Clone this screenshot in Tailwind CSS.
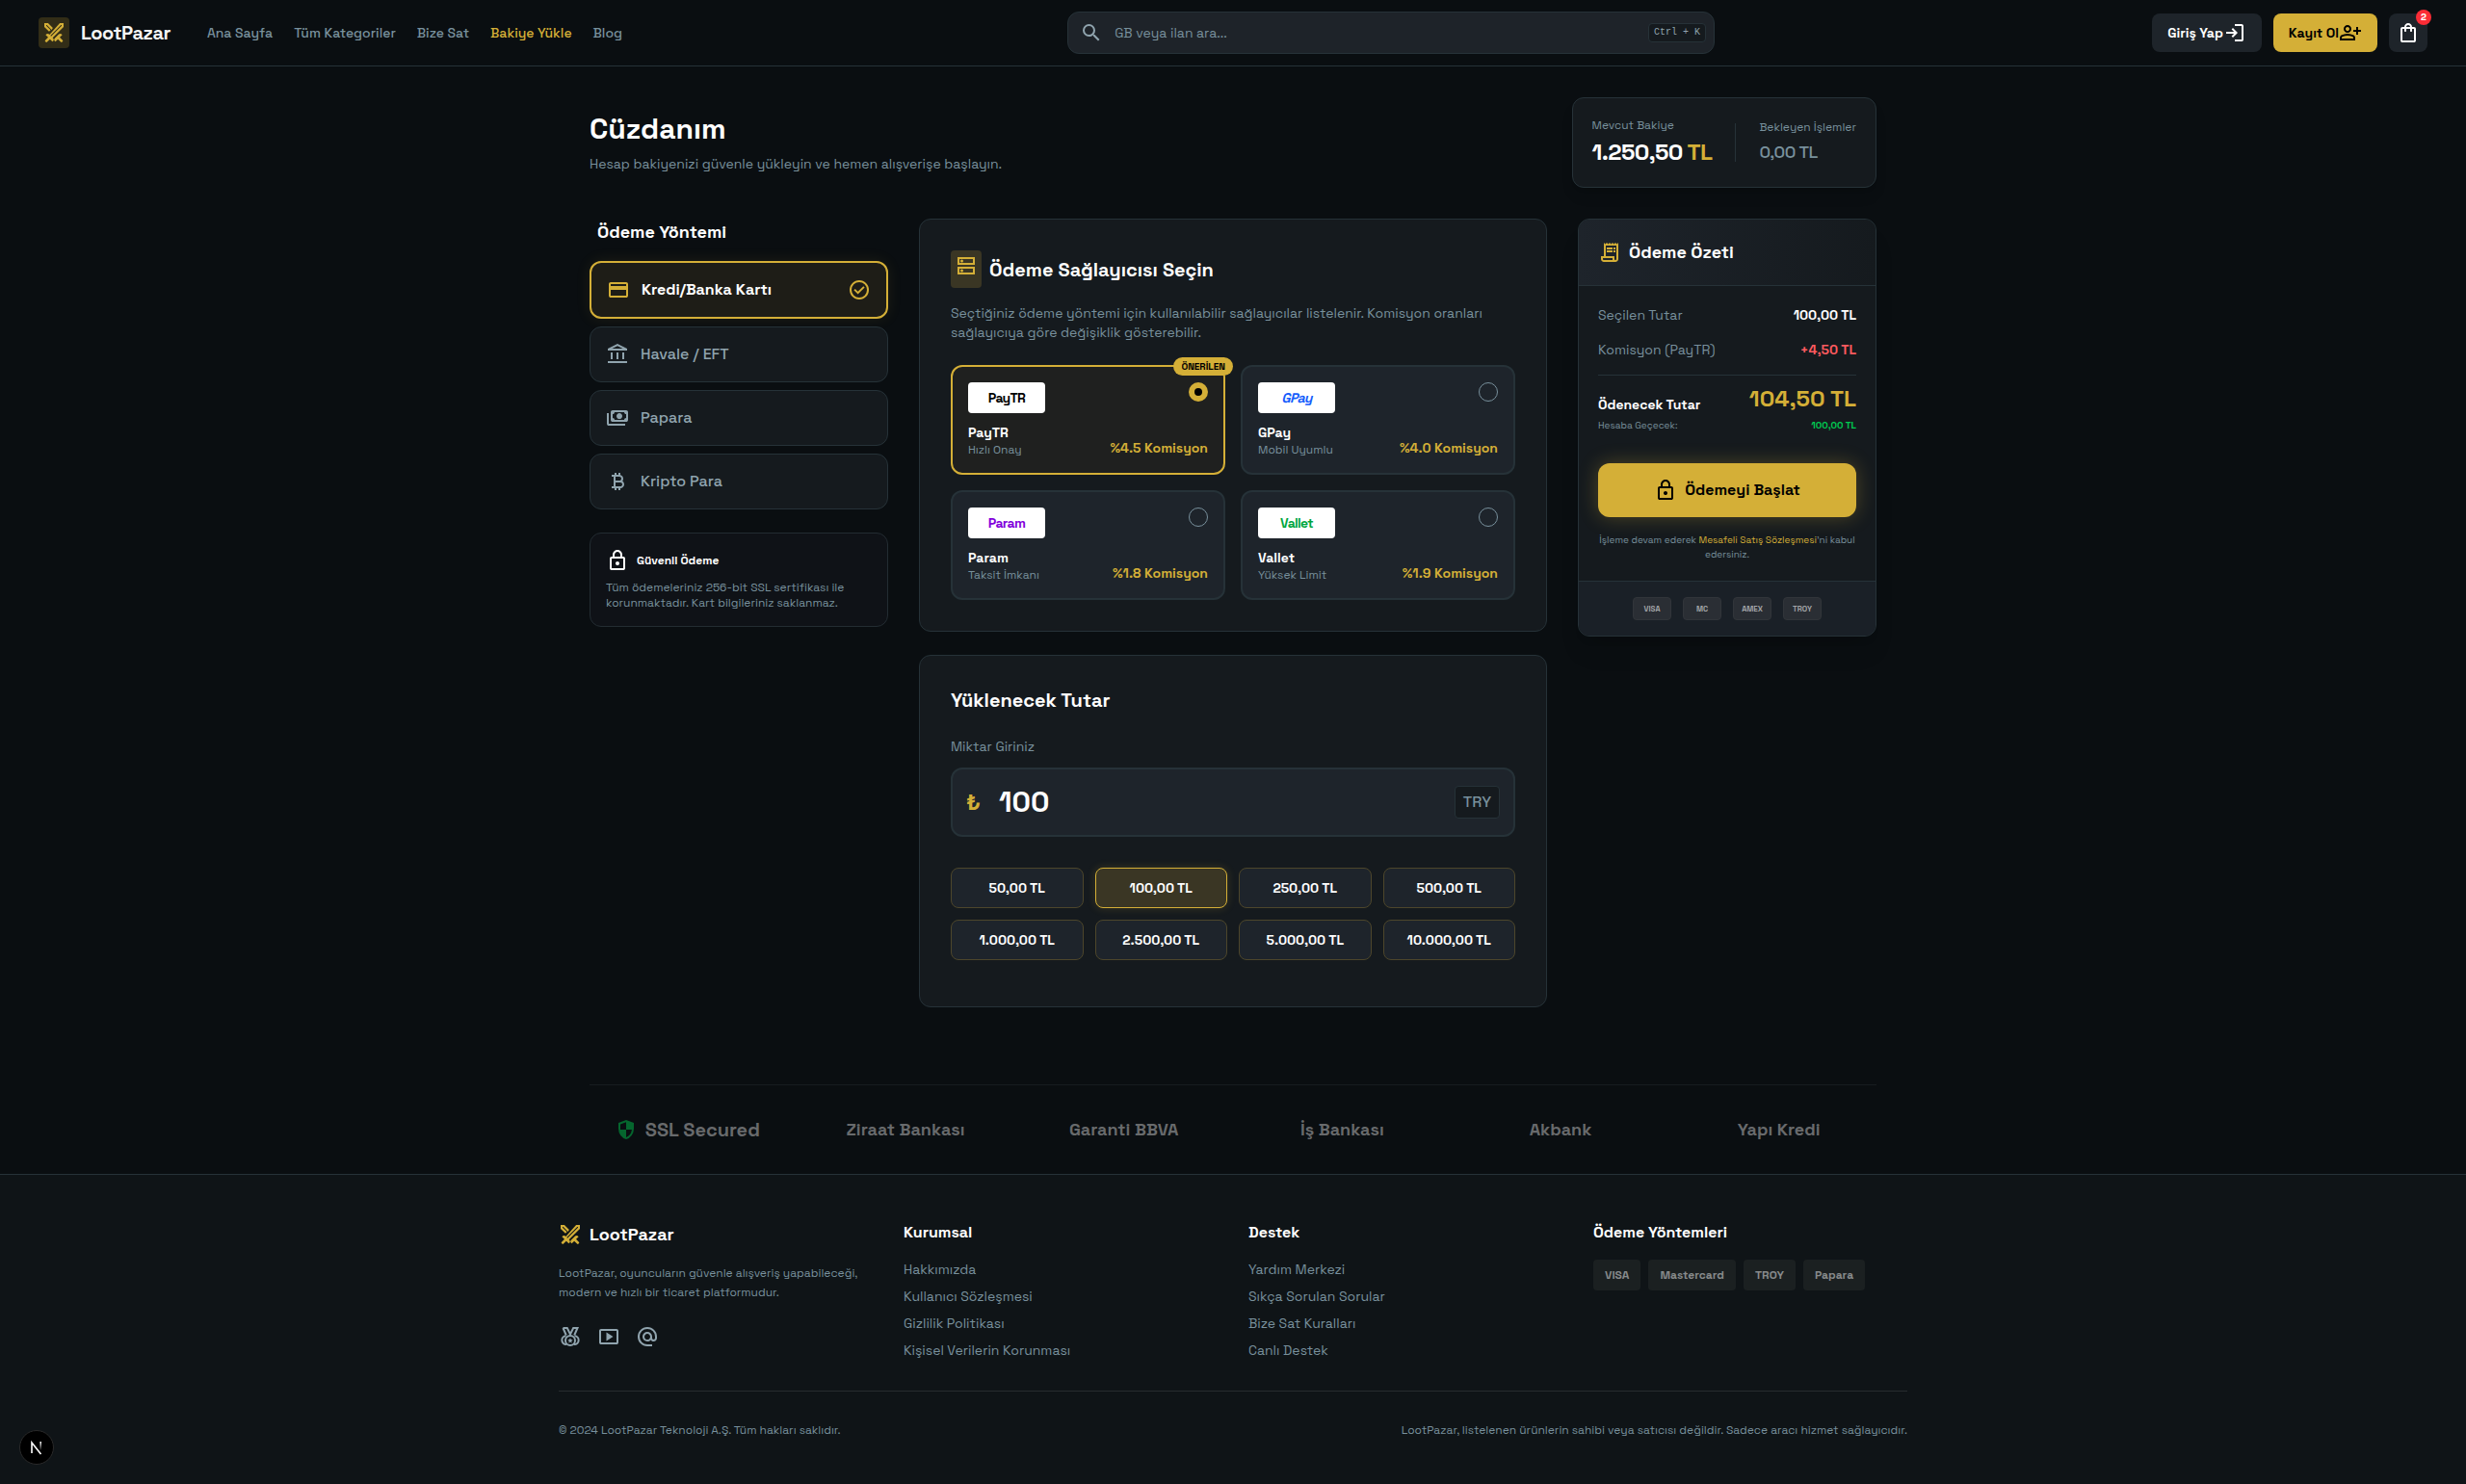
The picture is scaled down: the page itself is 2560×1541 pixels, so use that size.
<!DOCTYPE html>
<html lang="tr">
<head>
    <meta charset="UTF-8">
    <meta name="viewport" content="width=device-width, initial-scale=1.0">
    <title>Cüzdanım - LootPazar</title>
    <script src="https://cdn.jsdelivr.net/npm/@tailwindcss/browser@4"></script>
</head>
<body class="bg-[#0a0e11] text-white font-['Space_Grotesk',Inter,sans-serif] min-h-screen flex flex-col">

    <!-- Icon sprite -->
    <svg class="hidden" xmlns="http://www.w3.org/2000/svg">
        <symbol id="i-swords" viewBox="0 0 24 24"><path fill-rule="evenodd" d="M19.05 21.6l-2.925-2.9l-2.6 2.6l-.7-.7q-.6-.6-.6-1.425t.6-1.425l4.25-4.25q.6-.6 1.425-.6t1.425.6l.7.7l-2.6 2.6l2.9 2.925q.3.3.3.7t-.3.7l-.475.475q-.3.3-.7.3t-.7-.3M22 5.9L10.65 17.25l.525.5q.6.6.6 1.425t-.6 1.425l-.7.7l-2.6-2.6l-2.925 2.9q-.3.3-.7.3t-.7-.3l-.475-.475q-.3-.3-.3-.7t.3-.7l2.9-2.925l-2.6-2.6l.7-.7q.6-.6 1.425-.6t1.425.6l.5.525L18.1 2H22zM9.05 15.65L20 4.7V4h-.7L8.35 14.95zM6.95 10.85L2 5.9V2h3.9l4.95 4.95l-1.25 1.95L4.7 4H4v.7l4.6 4.6z"/></symbol>
        <symbol id="i-search" viewBox="0 0 24 24"><path d="M15.5 14h-.79l-.28-.27A6.471 6.471 0 0 0 16 9.5 6.5 6.5 0 1 0 9.5 16c1.61 0 3.09-.59 4.23-1.57l.27.28v.79l5 4.99L20.49 19l-4.99-5zm-6 0C7.01 14 5 11.99 5 9.5S7.01 5 9.5 5 14 7.01 14 9.5 11.99 14 9.5 14z"/></symbol>
        <symbol id="i-login" viewBox="0 0 24 24"><path d="M12 21v-2h7V5h-7V3h7q.825 0 1.413.588T21 5v14q0 .825-.587 1.413T19 21zm-2-4l-1.375-1.45l2.55-2.55H3v-2h8.175l-2.55-2.55L10 7l5 5z"/></symbol>
        <symbol id="i-person-add" viewBox="0 0 24 24"><path d="M18 14v-3h-3V9h3V6h2v3h3v2h-3v3zm-9-2q-1.65 0-2.825-1.175T5 8t1.175-2.825T9 4t2.825 1.175T13 8t-1.175 2.825T9 12m-8 8v-2.8q0-.85.438-1.562T2.6 14.55q1.55-.775 3.15-1.162T9 13t3.25.388t3.15 1.162q.725.375 1.163 1.088T17 17.2V20zm2-2h12v-.8q0-.275-.137-.5t-.363-.35q-1.35-.675-2.725-1.012T9 15t-2.775.338T3.5 16.35q-.225.125-.363.35T3 17.2zm6-8q.825 0 1.413-.587T11 8t-.587-1.412T9 6t-1.412.588T7 8t.588 1.413T9 10"/></symbol>
        <symbol id="i-bag" viewBox="0 0 24 24"><path d="M6 22q-.825 0-1.412-.587T4 20V8q0-.825.588-1.412T6 6h2q0-1.65 1.175-2.825T12 2t2.825 1.175T16 6h2q.825 0 1.413.588T20 8v12q0 .825-.587 1.413T18 22zm0-2h12V8h-2v2q0 .425-.288.713T15 11t-.712-.288T14 10V8h-4v2q0 .425-.288.713T9 11t-.712-.288T8 10V8H6zm4-14h4q0-.825-.587-1.412T12 4t-1.412.588T10 6"/></symbol>
        <symbol id="i-card" viewBox="0 0 24 24"><path d="M22 6v12q0 .825-.587 1.413T20 20H4q-.825 0-1.412-.587T2 18V6q0-.825.588-1.412T4 4h16q.825 0 1.413.588T22 6M4 8h16V6H4zm0 4v6h16v-6z"/></symbol>
        <symbol id="i-bank" viewBox="0 0 24 24"><path d="M5 17v-7h2v7zm6 0v-7h2v7zm-9 4v-2h20v2zm15-4v-7h2v7zM2 8V6l10-5l10 5v2zm4.475-2h11.05L12 3.25z"/></symbol>
        <symbol id="i-payments" viewBox="0 0 24 24"><path d="M14 13q-1.25 0-2.125-.875T11 10t.875-2.125T14 7t2.125.875T17 10t-.875 2.125T14 13m-7 3q-.825 0-1.412-.587T5 14V6q0-.825.588-1.412T7 4h14q.825 0 1.413.588T23 6v8q0 .825-.587 1.413T21 16zm2-2h10q0-.825.588-1.412T21 12V8q-.825 0-1.412-.587T19 6H9q0 .825-.587 1.413T7 8v4q.825 0 1.413.588T9 14m11 6H3q-.825 0-1.412-.587T1 18V7h2v11h17z"/></symbol>
        <symbol id="i-bitcoin" viewBox="0 0 24 24"><path d="M9 21v-2H6v-2h2V7H6V5h3V3h2v2h2V3h2v2.125q1.3.35 2.15 1.413T18 9q0 .725-.25 1.388t-.7 1.187q.875.525 1.413 1.425T19 15q0 1.65-1.175 2.825T15 19v2h-2v-2h-2v2zm1-10h4q.825 0 1.413-.587T16 9t-.587-1.412T14 7h-4zm0 6h5q.825 0 1.413-.587T17 15t-.587-1.412T15 13h-5z"/></symbol>
        <symbol id="i-lock" viewBox="0 0 24 24"><path d="M6 22q-.825 0-1.412-.587T4 20V10q0-.825.588-1.412T6 8h1V6q0-2.075 1.463-3.537T12 1t3.538 1.463T17 6v2h1q.825 0 1.413.588T20 10v10q0 .825-.587 1.413T18 22zm0-2h12V10H6zm6-3q.825 0 1.413-.587T14 15t-.587-1.412T12 13t-1.412.588T10 15t.588 1.413T12 17M9 8h6V6q0-1.25-.875-2.125T12 3t-2.125.875T9 6z"/></symbol>
        <symbol id="i-check" viewBox="0 0 24 24"><path d="m10.6 16.6l7.05-7.05l-1.4-1.4l-5.65 5.65l-2.85-2.85l-1.4 1.4zM12 22q-2.075 0-3.9-.788t-3.175-2.137T2.788 15.9T2 12t.788-3.9t2.137-3.175T8.1 2.788T12 2t3.9.788t3.175 2.137T21.213 8.1T22 12t-.788 3.9t-2.137 3.175t-3.175 2.138T12 22m0-2q3.35 0 5.675-2.325T20 12t-2.325-5.675T12 4T6.325 6.325T4 12t2.325 5.675T12 20"/></symbol>
        <symbol id="i-dns" viewBox="0 0 24 24"><path fill-rule="evenodd" d="M3 3h18v8H3zM5 5v4h14V5zM3 13h18v8H3zM5 15v4h14v-4z"/><circle cx="7.5" cy="7" r="1.5"/><circle cx="7.5" cy="17" r="1.5"/></symbol>
        <symbol id="i-receipt" viewBox="0 0 24 24"><path d="M19.5 3.5 18 2l-1.5 1.5L15 2l-1.5 1.5L12 2l-1.5 1.5L9 2 7.5 3.5 6 2v14H3v3c0 1.66 1.34 3 3 3h12c1.66 0 3-1.34 3-3V2l-1.5 1.5zM15 20H6c-.55 0-1-.45-1-1v-1h10v2zm4-1c0 .55-.45 1-1 1s-1-.45-1-1v-3H8V5h11v14zM9 7h6v2H9zM16 7h2v2h-2zM9 10h6v2H9zM16 10h2v2h-2z"/></symbol>
        <symbol id="i-shield" viewBox="0 0 24 24"><path d="M12 22q-3.475-.875-5.738-3.988T4 11.1V5l8-3l8 3v6.1q0 3.8-2.262 6.913T12 22m0-2.1q2.425-.75 4.05-2.963T17.95 12H12V4.125l-6 2.25v5.175q0 .175.05.45H12z"/></symbol>
        <symbol id="i-medal" viewBox="0 0 24 24"><g fill="none" stroke="currentColor" stroke-width="2"><circle cx="12" cy="16" r="5"/><path d="M7.5 11.2A4.2 4.2 0 1 0 8 20M16.5 11.2A4.2 4.2 0 1 1 16 20M4.5 3h4.3l3.2 6.5L15.2 3h4.3l-3.3 7.5M7.8 10.5 4.5 3"/></g><path d="M12 13.2l.8 1.8 1.9.2-1.4 1.3.4 1.9-1.7-1-1.7 1 .4-1.9-1.4-1.3 1.9-.2z"/></symbol>
        <symbol id="i-video" viewBox="0 0 24 24"><path d="M9.5 16.5l7-4.5l-7-4.5zM4 20q-.825 0-1.412-.587T2 18V6q0-.825.588-1.412T4 4h16q.825 0 1.413.588T22 6v12q0 .825-.587 1.413T20 20zm0-2h16V6H4z"/></symbol>
        <symbol id="i-at" viewBox="0 0 24 24"><path d="M12 22q-2.075 0-3.9-.788t-3.175-2.137T2.788 15.9T2 12t.788-3.9t2.137-3.175T8.1 2.788T12 2t3.9.788t3.175 2.137T21.213 8.1T22 12v1.45q0 1.475-1.012 2.513T18.5 17q-.875 0-1.65-.375t-1.3-1.075q-.725.725-1.638 1.088T12 17q-2.075 0-3.537-1.463T7 12t1.463-3.537T12 7t3.538 1.463T17 12v1.45q0 .65.425 1.1T18.5 15t1.075-.45t.425-1.1V12q0-3.35-2.325-5.675T12 4T6.325 6.325T4 12t2.325 5.675T12 20h5v2zm0-7q1.25 0 2.125-.875T15 12t-.875-2.125T12 9t-2.125.875T9 12t.875 2.125T12 15"/></symbol>
    </svg>

    <!-- Header -->
    <header class="h-[69px] border-b border-[#263238] px-10 flex items-center justify-between">
        <div class="flex items-center gap-[38px]">
            <a href="#" class="flex items-center gap-3">
                <span class="size-8 rounded bg-[#322d17] text-[#d4af37] flex items-center justify-center"><svg class="size-6 fill-current"><use href="#i-swords"/></svg></span>
                <span class="text-xl font-bold tracking-tight text-[#f5f5f5]">LootPazar</span>
            </a>
            <nav class="flex items-center gap-[22px] text-sm font-medium text-[#78909c]">
                <a href="#">Ana Sayfa</a>
                <a href="#">Tüm Kategoriler</a>
                <a href="#">Bize Sat</a>
                <a href="#" class="text-[#d4af37]">Bakiye Yükle</a>
                <a href="#">Blog</a>
            </nav>
        </div>
        <div class="w-full max-w-2xl h-11 ml-2 rounded-xl border border-[#263238] bg-[#1e2329] flex items-center pl-3 pr-2 gap-3">
            <svg class="size-6 fill-[#90a4ae] shrink-0"><use href="#i-search"/></svg>
            <input type="text" aria-label="Ara" placeholder="GB veya ilan ara..." class="flex-1 bg-transparent text-sm text-white placeholder-[#78909c] outline-none">
            <kbd class="h-5 px-[5px] rounded border border-[#263238] bg-[#151a1e] text-[10px] leading-[18px] font-['Liberation_Mono',monospace] text-[#90a4ae]">Ctrl + K</kbd>
        </div>
        <div class="flex items-center gap-3 text-sm font-bold">
            <button class="h-10 px-4 rounded-lg bg-[#1e242a] flex items-center">Giriş Yap<svg class="size-6 fill-current"><use href="#i-login"/></svg></button>
            <button class="h-10 px-4 rounded-lg bg-[#d4af37] text-black flex items-center">Kayıt Ol<svg class="size-6 fill-current"><use href="#i-person-add"/></svg></button>
            <button aria-label="Sepet" class="relative size-10 rounded-lg bg-[#1e242a] flex items-center justify-center">
                <svg class="size-6 fill-current"><use href="#i-bag"/></svg>
                <span class="absolute -top-1 -right-1 size-4 rounded-full bg-[#fb2c36] text-[10px] leading-4 text-center">2</span>
            </button>
        </div>
    </header>

    <main class="w-full max-w-[1400px] mx-auto px-8 pt-8">
        <div class="flex items-center justify-between mb-8">
            <div>
                <h1 class="text-3xl font-bold">Cüzdanım</h1>
                <p class="mt-2 text-sm text-[#78909c]">Hesap bakiyenizi güvenle yükleyin ve hemen alışverişe başlayın.</p>
            </div>
            <div class="rounded-xl border border-[#263238] bg-[#151a1e] p-5 flex items-center gap-6 shadow-lg">
                <div>
                    <p class="text-xs text-[#78909c]">Mevcut Bakiye</p>
                    <p class="mt-1 text-2xl font-bold tracking-tight">1.250,50 <span class="text-[#d4af37]">TL</span></p>
                </div>
                <div class="w-px h-10 bg-[#263238]"></div>
                <div>
                    <p class="text-xs text-[#78909c]">Bekleyen İşlemler</p>
                    <p class="mt-1 text-lg font-medium tracking-tight text-[#78909c]">0,00 TL</p>
                </div>
            </div>
        </div>

        <div class="grid grid-cols-12 gap-8 items-start">
            <!-- Payment methods -->
            <aside class="col-span-3">
                <h3 class="px-2 mb-4 text-lg font-bold">Ödeme Yöntemi</h3>
                <div class="space-y-2 text-base font-medium text-[#90a4ae]">
                    <button class="w-full p-4 rounded-xl border-2 border-[#d4af37] bg-[#1e1d17] flex items-center gap-3 font-bold text-white shadow-[0_0_15px_rgba(212,175,55,0.1)]">
                        <svg class="size-6 fill-[#d4af37]"><use href="#i-card"/></svg>Kredi/Banka Kartı
                        <svg class="size-6 fill-[#d4af37] ml-auto"><use href="#i-check"/></svg>
                    </button>
                    <button class="w-full p-4 rounded-xl border border-[#263238] bg-[#151a1e] flex items-center gap-3"><svg class="size-6 fill-current"><use href="#i-bank"/></svg>Havale / EFT</button>
                    <button class="w-full p-4 rounded-xl border border-[#263238] bg-[#151a1e] flex items-center gap-3"><svg class="size-6 fill-current"><use href="#i-payments"/></svg>Papara</button>
                    <button class="w-full p-4 rounded-xl border border-[#263238] bg-[#151a1e] flex items-center gap-3"><svg class="size-6 fill-current"><use href="#i-bitcoin"/></svg>Kripto Para</button>
                </div>
                <div class="mt-6 p-4 rounded-xl border border-[#232c32] bg-[#0f1217]">
                    <div class="flex items-center gap-2 mb-2 text-xs font-bold"><svg class="size-6 fill-current"><use href="#i-lock"/></svg>Güvenli Ödeme</div>
                    <p class="text-xs text-[#78909c]">Tüm ödemeleriniz 256-bit SSL sertifikası ile korunmaktadır. Kart bilgileriniz saklanmaz.</p>
                </div>
            </aside>

            <div class="col-span-6 space-y-6">
                <!-- Providers -->
                <section class="rounded-xl border border-[#263238] bg-[#151a1e] p-8">
                    <h2 class="flex items-center gap-2 text-xl font-bold">
                        <span class="w-8 h-[39px] pt-1 rounded bg-[#3a3624] flex items-start justify-center"><svg class="size-6 fill-[#d4af37]"><use href="#i-dns"/></svg></span>
                        Ödeme Sağlayıcısı Seçin
                    </h2>
                    <p class="mt-4 mb-6 text-sm text-[#78909c]">Seçtiğiniz ödeme yöntemi için kullanılabilir sağlayıcılar listelenir. Komisyon oranları sağlayıcıya göre değişiklik gösterebilir.</p>
                    <div class="grid grid-cols-2 gap-4">
                        <label class="relative p-4 rounded-xl border-2 border-[#d4af37] bg-[#1f201f]">
                            <span class="absolute -top-2.5 -right-2.5 px-2 rounded-full bg-[#d4af37] text-black text-[10px] leading-[19px] font-bold">ÖNERİLEN</span>
                            <span class="flex justify-between items-start">
                                <span class="w-20 h-8 rounded bg-white text-black text-sm leading-8 font-bold tracking-tighter text-center">PayTR</span>
                                <input type="radio" name="provider" checked class="appearance-none size-5 rounded-full border-[#78909c] border checked:border-[6px] checked:border-[#d4af37] checked:bg-black">
                            </span>
                            <span class="mt-2.5 flex justify-between items-end">
                                <span><span class="block text-sm font-bold">PayTR</span><span class="block text-xs text-[#78909c]">Hızlı Onay</span></span>
                                <span class="text-sm font-bold text-[#d4af37]">%4.5 Komisyon</span>
                            </span>
                        </label>
                        <label class="relative p-4 rounded-xl border-2 border-[#263238] bg-[#1e242b]">
                            <span class="flex justify-between items-start">
                                <span class="w-20 h-8 rounded bg-white text-[#155dfc] text-sm leading-8 font-bold italic tracking-tighter text-center">GPay</span>
                                <input type="radio" name="provider" class="appearance-none size-5 rounded-full border-[#78909c] border checked:border-[6px] checked:border-[#d4af37] checked:bg-black">
                            </span>
                            <span class="mt-2.5 flex justify-between items-end">
                                <span><span class="block text-sm font-bold">GPay</span><span class="block text-xs text-[#78909c]">Mobil Uyumlu</span></span>
                                <span class="text-sm font-bold text-[#d4af37]">%4.0 Komisyon</span>
                            </span>
                        </label>
                        <label class="relative p-4 rounded-xl border-2 border-[#263238] bg-[#1e242b]">
                            <span class="flex justify-between items-start">
                                <span class="w-20 h-8 rounded bg-white text-[#8200db] text-sm leading-8 font-bold tracking-tighter text-center">Param</span>
                                <input type="radio" name="provider" class="appearance-none size-5 rounded-full border-[#78909c] border checked:border-[6px] checked:border-[#d4af37] checked:bg-black">
                            </span>
                            <span class="mt-2.5 flex justify-between items-end">
                                <span><span class="block text-sm font-bold">Param</span><span class="block text-xs text-[#78909c]">Taksit İmkanı</span></span>
                                <span class="text-sm font-bold text-[#d4af37]">%1.8 Komisyon</span>
                            </span>
                        </label>
                        <label class="relative p-4 rounded-xl border-2 border-[#263238] bg-[#1e242b]">
                            <span class="flex justify-between items-start">
                                <span class="w-20 h-8 rounded bg-white text-[#00a63e] text-sm leading-8 font-bold tracking-tighter text-center">Vallet</span>
                                <input type="radio" name="provider" class="appearance-none size-5 rounded-full border-[#78909c] border checked:border-[6px] checked:border-[#d4af37] checked:bg-black">
                            </span>
                            <span class="mt-2.5 flex justify-between items-end">
                                <span><span class="block text-sm font-bold">Vallet</span><span class="block text-xs text-[#78909c]">Yüksek Limit</span></span>
                                <span class="text-sm font-bold text-[#d4af37]">%1.9 Komisyon</span>
                            </span>
                        </label>
                    </div>
                </section>

                <!-- Amount -->
                <section class="rounded-xl border border-[#263238] bg-[#151a1e] p-8 pb-12">
                    <h2 class="text-xl font-bold mb-6">Yüklenecek Tutar</h2>
                    <label for="amount" class="block mb-3 text-sm text-[#78909c]">Miktar Giriniz</label>
                    <div class="h-[72px] px-3.5 rounded-xl border-2 border-[#263238] bg-[#1e242b] flex items-center gap-4">
                        <span class="w-[18px] text-2xl font-bold text-[#d4af37]">₺</span>
                        <input id="amount" type="text" value="100" class="flex-1 min-w-0 bg-transparent text-3xl font-bold outline-none">
                        <span class="h-[34px] px-2 rounded border border-[#263238] bg-[#151a1e] text-base leading-8 font-medium text-[#78909c]">TRY</span>
                    </div>
                    <div class="mt-8 grid grid-cols-4 gap-3 text-sm font-bold">
                        <button class="h-[42px] rounded-lg border border-[#4d462b] bg-[#1e242b]">50,00 TL</button>
                        <button class="h-[42px] rounded-lg border border-[#d4af37] bg-[#3a3624] shadow-[0_0_10px_rgba(212,175,55,0.2)]">100,00 TL</button>
                        <button class="h-[42px] rounded-lg border border-[#4d462b] bg-[#1e242b]">250,00 TL</button>
                        <button class="h-[42px] rounded-lg border border-[#4d462b] bg-[#1e242b]">500,00 TL</button>
                        <button class="h-[42px] rounded-lg border border-[#4d462b] bg-[#1e242b]">1.000,00 TL</button>
                        <button class="h-[42px] rounded-lg border border-[#4d462b] bg-[#1e242b]">2.500,00 TL</button>
                        <button class="h-[42px] rounded-lg border border-[#4d462b] bg-[#1e242b]">5.000,00 TL</button>
                        <button class="h-[42px] rounded-lg border border-[#4d462b] bg-[#1e242b]">10.000,00 TL</button>
                    </div>
                </section>
            </div>

            <!-- Summary -->
            <aside class="col-span-3 rounded-xl border border-[#263238] bg-[#151a1e] overflow-hidden shadow-xl">
                <h3 class="px-5 h-[69px] border-b border-[#263238] bg-linear-to-r from-[#1e242b] to-[#151a1e] flex items-center gap-2 text-lg font-bold"><svg class="size-6 fill-[#d4af37]"><use href="#i-receipt"/></svg>Ödeme Özeti</h3>
                <div class="p-5">
                    <div class="flex justify-between text-sm"><span class="text-[#78909c]">Seçilen Tutar</span><span class="font-bold">100,00 TL</span></div>
                    <div class="mt-4 flex justify-between text-sm"><span class="text-[#78909c]">Komisyon (PayTR)</span><span class="font-bold text-[#ff5a5f]">+4,50 TL</span></div>
                    <div class="mt-4 pt-2 border-t border-[#263238] flex justify-between items-end">
                        <span class="text-sm font-bold">Ödenecek Tutar</span>
                        <span class="text-2xl font-bold text-[#d4af37]">104,50 TL</span>
                    </div>
                    <div class="mt-1 flex justify-between text-[10px] leading-[15px]"><span class="text-[#78909c]">Hesaba Geçecek:</span><span class="font-bold text-[#00c951]">100,00 TL</span></div>
                    <button class="mt-8 w-full h-14 rounded-xl bg-[#d4af37] text-black text-base font-bold flex items-center justify-center gap-2 shadow-[0_0_20px_rgba(212,175,55,0.3)]"><svg class="size-6 fill-current"><use href="#i-lock"/></svg>Ödemeyi Başlat</button>
                    <p class="mt-4 text-center text-[10px] leading-[15px] text-[#78909c]">İşleme devam ederek <a href="#" class="text-[#d4af37]">Mesafeli Satış Sözleşmesi</a>'ni kabul edersiniz.</p>
                </div>
                <div class="p-4 border-t border-[#263238] bg-[#1a2027] flex justify-center gap-3 text-[8px] leading-[22px] font-bold text-[#a3a5a8] text-center">
                    <span class="w-10 rounded border border-[#31353a] bg-[#2a2e34]">VISA</span>
                    <span class="w-10 rounded border border-[#31353a] bg-[#2a2e34]">MC</span>
                    <span class="w-10 rounded border border-[#31353a] bg-[#2a2e34]">AMEX</span>
                    <span class="w-10 rounded border border-[#31353a] bg-[#2a2e34]">TROY</span>
                </div>
            </aside>
        </div>

        <!-- Partner banks -->
        <div class="mt-20 py-8 border-t border-[#171c20] grid grid-cols-6 gap-6 text-lg leading-7 font-bold text-[#686a6c] text-center">
            <span class="flex items-center justify-center gap-2 text-xl"><svg class="size-6 fill-[#05662e]"><use href="#i-shield"/></svg>SSL Secured</span>
            <span>Ziraat Bankası</span>
            <span>Garanti BBVA</span>
            <span>İş Bankası</span>
            <span>Akbank</span>
            <span>Yapı Kredi</span>
        </div>
    </main>

    <!-- Footer -->
    <footer class="flex-1 border-t border-[#263238] bg-[#0f1417] py-12">
        <div class="max-w-[1400px] mx-auto">
            <div class="grid grid-cols-4 gap-8">
                <div>
                    <div class="flex items-center gap-2 text-lg font-bold"><svg class="size-6 fill-[#d4af37]"><use href="#i-swords"/></svg>LootPazar</div>
                    <p class="mt-4 text-xs leading-5 text-[#78909c]">LootPazar, oyuncuların güvenle alışveriş yapabileceği, modern ve hızlı bir ticaret platformudur.</p>
                    <div class="mt-6 flex gap-4 text-[#90a4ae]">
                        <a href="#" aria-label="Sıralama"><svg class="size-6 fill-current"><use href="#i-medal"/></svg></a>
                        <a href="#" aria-label="Video"><svg class="size-6 fill-current"><use href="#i-video"/></svg></a>
                        <a href="#" aria-label="E-posta"><svg class="size-6 fill-current"><use href="#i-at"/></svg></a>
                    </div>
                </div>
                <div>
                    <h4 class="font-bold mb-4">Kurumsal</h4>
                    <ul class="space-y-2 text-sm text-[#78909c]">
                        <li><a href="#">Hakkımızda</a></li>
                        <li><a href="#">Kullanıcı Sözleşmesi</a></li>
                        <li><a href="#">Gizlilik Politikası</a></li>
                        <li><a href="#">Kişisel Verilerin Korunması</a></li>
                    </ul>
                </div>
                <div>
                    <h4 class="font-bold mb-4">Destek</h4>
                    <ul class="space-y-2 text-sm text-[#78909c]">
                        <li><a href="#">Yardım Merkezi</a></li>
                        <li><a href="#">Sıkça Sorulan Sorular</a></li>
                        <li><a href="#">Bize Sat Kuralları</a></li>
                        <li><a href="#">Canlı Destek</a></li>
                    </ul>
                </div>
                <div>
                    <h4 class="font-bold mb-4">Ödeme Yöntemleri</h4>
                    <div class="flex gap-2 text-xs leading-8 font-bold text-[#878a8b]">
                        <span class="px-3 rounded bg-[#1b2021]">VISA</span>
                        <span class="px-3 rounded bg-[#1b2021]">Mastercard</span>
                        <span class="px-3 rounded bg-[#1b2021]">TROY</span>
                        <span class="px-3 rounded bg-[#1b2021]">Papara</span>
                    </div>
                </div>
            </div>
            <div class="mt-8 pt-8 border-t border-[#272c2f] flex justify-between text-xs text-[#78909c]">
                <p>© 2024 LootPazar Teknoloji A.Ş. Tüm hakları saklıdır.</p>
                <p>LootPazar, listelenen ürünlerin sahibi veya satıcısı değildir. Sadece aracı hizmet sağlayıcıdır.</p>
            </div>
        </div>
    </footer>

    <!-- Dev tools badge -->
    <button aria-label="Geliştirici araçları" class="fixed left-5 bottom-5 size-9 rounded-full bg-black border border-[#2a2a2a] flex items-center justify-center">
        <svg class="size-5" viewBox="0 0 20 20" fill="none" stroke-width="1.6">
            <defs><linearGradient id="nfade" x1="0" y1="4" x2="0" y2="13" gradientUnits="userSpaceOnUse"><stop stop-color="#fff"/><stop offset="1" stop-color="#fff" stop-opacity="0"/></linearGradient></defs>
            <path stroke="#fff" d="M5 16V5l9.5 12"/>
            <path stroke="url(#nfade)" d="M14.2 4v9"/>
        </svg>
    </button>
</body>
</html>
